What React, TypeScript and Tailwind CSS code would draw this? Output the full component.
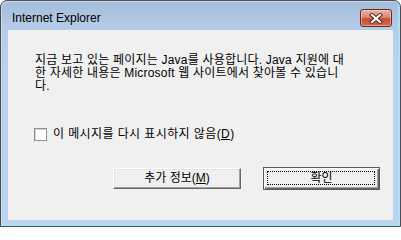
import React from "react";

const kr = { fontFamily: '"Liberation Sans", "Noto Sans CJK KR", sans-serif' };

export default function App() {
  return (
    <div className="w-[401px] h-[227px] bg-white">
      <div className="w-[401px] h-[227px] flex flex-col border border-[#4b4f55] rounded-t-[7px] bg-[linear-gradient(to_bottom,#a3bcd9_0px,#b3cbe6_24px,#bad2ec_60px,#bcd5ee_100%)] shadow-[inset_-2px_-2px_0_#aee0f6,inset_1px_1px_0_#c6d8ec] overflow-hidden">
        {/* Title bar */}
        <div className="h-[29px] flex items-start justify-between">
          <div
            className="pl-[11px] pt-[10px] text-[12px] leading-[14px] text-black"
            style={{ fontFamily: '"Liberation Sans", "Noto Sans", sans-serif' }}
          >
            Internet Explorer
          </div>
          <div className="mt-[8px] mr-[8px] w-[32px] h-[18px] rounded-[3px] border border-[#5e2a22] bg-[linear-gradient(to_bottom,#e9b3a5_0%,#d88873_45%,#c44f33_55%,#cf6a4c_100%)] shadow-[inset_0_0_0_1px_rgba(255,220,210,0.5)] flex items-center justify-center">
            <svg width="16" height="11" viewBox="0 0 16 11">
              <path d="M4 2 L12 9 M12 2 L4 9" stroke="#5b2a22" strokeWidth="4" strokeLinecap="square" />
              <path d="M4 2 L12 9 M12 2 L4 9" stroke="#ffffff" strokeWidth="2" strokeLinecap="square" />
            </svg>
          </div>
        </div>
        {/* Client area */}
        <div className="mx-[7px] h-[190px] bg-[#f0f0f0] flex flex-col text-[12px] text-black" style={kr}>
          <div className="mt-[24px] ml-[27px] leading-[13px] tracking-[0.2px]">
            <div>지금 보고 있는 페이지는 Java를 사용합니다. Java 지원에 대</div>
            <div>한 자세한 내용은 Microsoft 웹 사이트에서 찾아볼 수 있습니</div>
            <div>다.</div>
          </div>
          <div className="mt-[35px] ml-[26px] flex items-center h-[13px]">
            <div className="w-[13px] h-[13px] bg-white border border-[#8e8f8f] shadow-[inset_1px_1px_0_#d4d4d4]" />
            <div className="ml-[6px] leading-[13px] tracking-[0.4px]">
              이 메시지를 다시 표시하지 않음(<span className="underline">D</span>)
            </div>
          </div>
          <div className="mt-[26px] ml-[105px] flex items-start">
            <div className="mt-[1px] w-[128px] h-[21px] bg-[#f0f0f0] border-t border-l border-white border-r border-b border-r-[#696969] border-b-[#696969] shadow-[inset_-1px_-1px_0_#a0a0a0,inset_1px_1px_0_#e3e3e3] flex items-center justify-center leading-[13px]">
              추가 정보(<span className="underline">M</span>)
            </div>
            <div className="ml-[22px] w-[117px] h-[23px] relative bg-[#f0f0f0] border border-[#5a5a5a] shadow-[inset_1px_1px_0_#ffffff,inset_-1px_-1px_0_#696969,inset_-2px_-2px_0_#a0a0a0] flex items-center justify-center leading-[13px]">
              <span className="absolute left-[3px] top-[3px] right-[4px] bottom-[4px] border border-dotted border-black" />
              확인
            </div>
          </div>
        </div>
      </div>
    </div>
  );
}
